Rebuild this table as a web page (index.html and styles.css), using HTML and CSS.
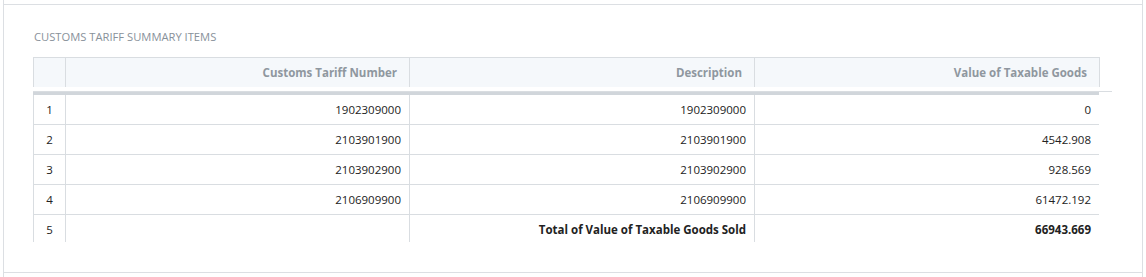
FILE: index.html
```html
<!DOCTYPE html>
<html lang="en">
<head>
<meta charset="utf-8">
<title>Customs Tariff Summary Items</title>
<link rel="stylesheet" href="styles.css">
</head>
<body>
<div class="frame">
  <section class="panel">
    <h2 class="title">CUSTOMS TARIFF SUMMARY ITEMS</h2>
    <div class="grid">
      <div class="grid-head">
        <table class="tbl head">
          <colgroup><col class="c-num"><col class="c-a"><col class="c-b"><col class="c-c"></colgroup>
          <thead>
            <tr><th></th><th>Customs Tariff Number</th><th>Description</th><th>Value of Taxable Goods</th></tr>
          </thead>
        </table>
      </div>
      <div class="grid-body">
        <table class="tbl body">
          <colgroup><col class="c-num"><col class="c-a"><col class="c-b"><col class="c-c"></colgroup>
          <tbody>
            <tr><td class="num">1</td><td>1902309000</td><td>1902309000</td><td>0</td></tr>
            <tr><td class="num">2</td><td>2103901900</td><td>2103901900</td><td>4542.908</td></tr>
            <tr><td class="num">3</td><td>2103902900</td><td>2103902900</td><td>928.569</td></tr>
            <tr><td class="num">4</td><td>2106909900</td><td>2106909900</td><td>61472.192</td></tr>
            <tr class="total"><td class="num">5</td><td></td><td>Total of Value of Taxable Goods Sold</td><td>66943.669</td></tr>
          </tbody>
        </table>
      </div>
    </div>
  </section>
</div>
</body>
</html>
```
FILE: styles.css
```css
html, body {
  margin: 0;
  padding: 0;
  background: #fff;
}
body {
  font-family: "Open Sans", "Noto Sans", sans-serif;
  color: #222;
}
.frame {
  margin: 0 3px;
  height: 277px;
  box-sizing: border-box;
  border-left: 1px solid #dcdfe3;
  border-right: 1px solid #dcdfe3;
  padding-top: 4px;
}
.panel {
  box-sizing: border-box;
  height: 269px;
  border-top: 1px solid #dcdfe3;
  border-bottom: 1px solid #dcdfe3;
  padding: 25px 0 0 29px;
}
.title {
  margin: 0 0 13px 1px;
  font-size: 11.2px;
  line-height: 14px;
  font-weight: 400;
  color: #88919a;
  letter-spacing: 0;
}
.grid-head {
  width: 1079px;
  padding-bottom: 4px;
  border-bottom: 1px solid #d9dde1;
}
.tbl {
  border-collapse: collapse;
  table-layout: fixed;
  width: 1066px;
}
.c-num { width: 32px; }
.c-a { width: 344px; }
.c-b { width: 345px; }
.c-c { width: 345px; }
.head th {
  height: 29px;
  padding: 0 12px 0 0;
  background: #f5f8fb;
  border: 1px solid #d9dde1;
  border-bottom: 0;
  text-align: right;
  font-size: 11.5px;
  font-weight: 700;
  color: #8f979f;
  white-space: nowrap;
}
.grid-body {
  width: 1066px;
  height: 150px;
  overflow: hidden;
}
.body {
  border-top: 3px solid #d1d6db;
}
.body td {
  height: 29px;
  padding: 0 8px 0 0;
  border: 1px solid #d9dde1;
  border-top: 0;
  text-align: right;
  font-size: 11.5px;
  color: #222;
  white-space: nowrap;
}
.body td.num {
  text-align: center;
  padding: 0;
}
.total td {
  font-weight: 700;
  border-bottom: 0;
}
.total td.num {
  font-weight: 400;
}
```
